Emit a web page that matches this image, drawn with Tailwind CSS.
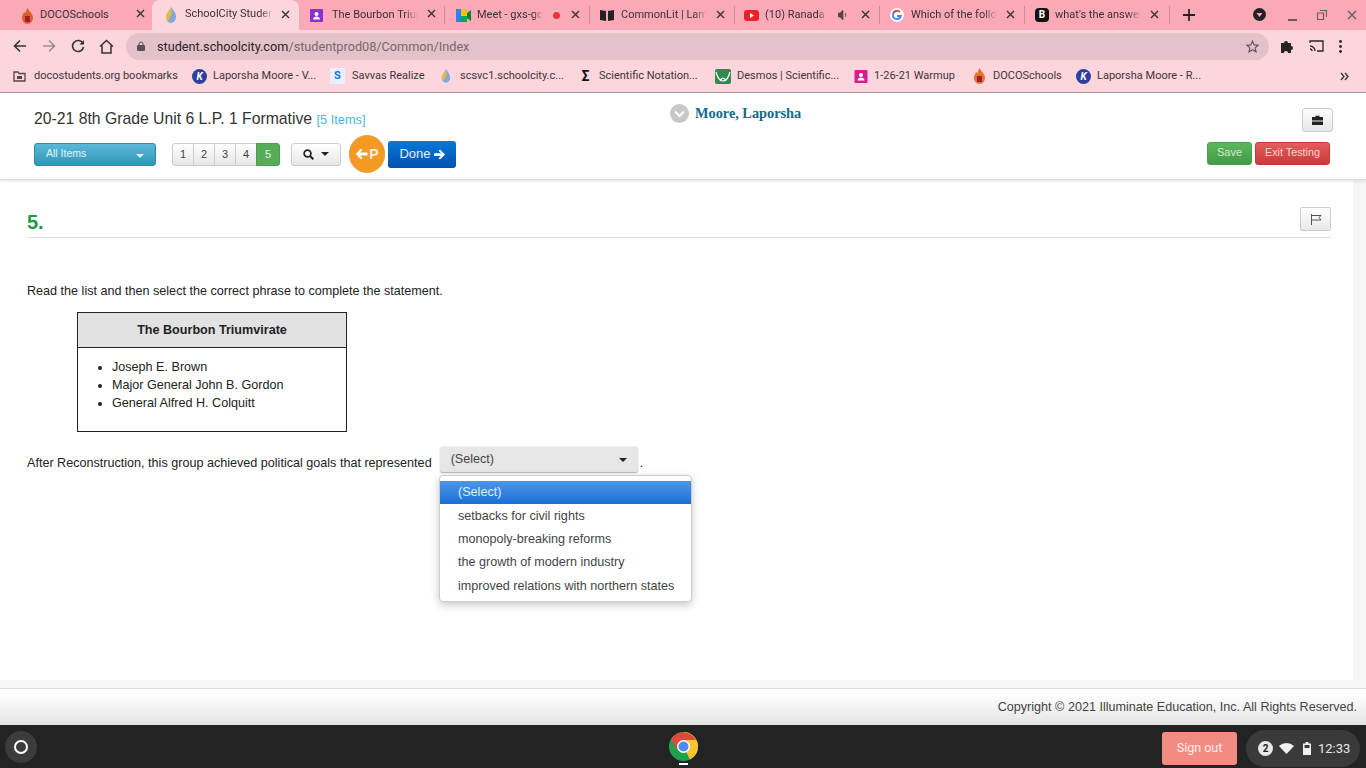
<!DOCTYPE html>
<html lang="en">
<head>
  <meta charset="UTF-8" />
  <title>SchoolCity Student</title>
  <script src="https://cdn.jsdelivr.net/npm/@tailwindcss/browser@4"></script>
</head>
<body class="w-[1366px] h-[768px] overflow-hidden bg-white font-['Liberation_Sans',sans-serif] text-[12.6px] text-[#222] flex flex-col">

  <!-- browser tabs -->
  <div class="h-[30px] bg-[#fba9b6] flex items-end pl-2 font-['Roboto',sans-serif] text-[11px] text-[#3a3034] relative shrink-0">
    <div class="w-[145px] h-[28px] pb-[1px] flex items-center pl-3 relative">
      <svg class="w-[15px] h-[16px] shrink-0" viewBox="0 0 15 16"><path d="M7.500 0c1 3 5.500 5 5.500 10a5.500 6 0 0 1-11 0c0-3 1.500-4 2-6 1 1 1.500 1 1.500 1 .5-2 1-3 2-5z" fill="#d9622b"/><rect x="5" y="8" width="5" height="6" fill="#a51e2c"/></svg>
      <span class="ml-[5px] w-[80px] overflow-hidden whitespace-nowrap">DOCOSchools</span>
      <svg class="absolute left-[128px] top-[7px] w-[9px] h-[9px]" viewBox="0 0 9 9"><path d="M1 1l7 7M8 1l-7 7" stroke="#3a3034" stroke-width="1.400"/></svg>
    </div>
    <div class="w-[147px] h-[30px] pb-[1px] -ml-px bg-[#fdd5dd] rounded-t-lg flex items-center pl-3 relative">
      <svg class="w-[13px] h-[16px] shrink-0" viewBox="0 0 13 16"><path d="M7 0c3 4 5 6 5 10a5 6 0 0 1-10 0c0-3 3-6 5-10z" fill="#7fa8dc"/><path d="M7 1c2 4 0 8-3 13a5 5 0 0 1-2-4c0-3 3-6 5-9z" fill="#e8b93f"/></svg>
      <span class="ml-[8px] w-[88px] overflow-hidden whitespace-nowrap [mask-image:linear-gradient(90deg,#000_85%,transparent)]">SchoolCity Student</span>
      <svg class="absolute left-[129px] top-[10px] w-[9px] h-[9px]" viewBox="0 0 9 9"><path d="M1 1l7 7M8 1l-7 7" stroke="#3a3034" stroke-width="1.400"/></svg>
    </div>
    <div class="w-[145px] h-[28px] pb-[1px] flex items-center pl-[11px] relative">
      <svg class="w-[13px] h-[13px] shrink-0" viewBox="0 0 13 13"><rect width="13" height="13" rx="1" fill="#8a2fd6"/><circle cx="6.500" cy="5" r="2" fill="#fff"/><path d="M3 10.500c0-4 7-4 7 0z" fill="#fff"/></svg>
      <span class="ml-[9px] w-[86px] overflow-hidden whitespace-nowrap [mask-image:linear-gradient(90deg,#000_85%,transparent)]">The Bourbon Triumvirate</span>
      <svg class="absolute left-[128px] top-[7px] w-[9px] h-[9px]" viewBox="0 0 9 9"><path d="M1 1l7 7M8 1l-7 7" stroke="#3a3034" stroke-width="1.400"/></svg>
    </div>
    <div class="w-[145px] h-[18px] self-center flex items-center pl-[11px] relative border-l border-[#c98d98]">
      <svg class="w-[15px] h-[13px] shrink-0" viewBox="0 0 15 13"><rect width="5" height="13" fill="#2684fc"/><rect x="5" width="6" height="6" fill="#fbbc04"/><rect x="5" y="7" width="6" height="6" fill="#00ac47"/><path d="M11 4l4-3v11l-4-3z" fill="#00832d"/></svg>
      <span class="ml-[6px] w-[66px] overflow-hidden whitespace-nowrap [mask-image:linear-gradient(90deg,#000_85%,transparent)]">Meet - gxs-gcdx-abc</span>
      <span class="ml-[8px] w-[11px] h-[11px] rounded-full bg-[#e8323c] border-2 border-[#f7b0b6] shrink-0"></span>
      <svg class="absolute left-[126px] top-[4px] w-[9px] h-[9px]" viewBox="0 0 9 9"><path d="M1 1l7 7M8 1l-7 7" stroke="#3a3034" stroke-width="1.400"/></svg>
    </div>
    <div class="w-[145px] h-[18px] self-center flex items-center pl-[10px] relative border-l border-[#c98d98]">
      <svg class="w-[14px] h-[12px] shrink-0" viewBox="0 0 14 12"><path d="M0 1l6 1v10L0 11zM8 2l6-1v10l-6 1z" fill="#222"/></svg>
      <span class="ml-[7px] w-[86px] overflow-hidden whitespace-nowrap [mask-image:linear-gradient(90deg,#000_85%,transparent)]">CommonLit | Lam</span>
      <svg class="absolute left-[126px] top-[4px] w-[9px] h-[9px]" viewBox="0 0 9 9"><path d="M1 1l7 7M8 1l-7 7" stroke="#3a3034" stroke-width="1.400"/></svg>
    </div>
    <div class="w-[145px] h-[18px] self-center flex items-center pl-[9px] relative border-l border-[#c98d98]">
      <svg class="w-[15px] h-[11px] shrink-0" viewBox="0 0 15 11"><rect width="15" height="11" rx="3" fill="#e8212b"/><path d="M6 3l4 2.500-4 2.500z" fill="#fff"/></svg>
      <span class="ml-[6px] w-[62px] overflow-hidden whitespace-nowrap [mask-image:linear-gradient(90deg,#000_85%,transparent)]">(10) Ranada - Hey</span>
      <svg class="ml-[11px] w-[10px] h-[10px] shrink-0" viewBox="0 0 10 10"><path d="M0 3h2l3-3v10L2 7H0zM7 3c1 1 1 3 0 4" fill="#544" stroke="#544" stroke-width=".6"/></svg>
      <svg class="absolute left-[126px] top-[4px] w-[9px] h-[9px]" viewBox="0 0 9 9"><path d="M1 1l7 7M8 1l-7 7" stroke="#3a3034" stroke-width="1.400"/></svg>
    </div>
    <div class="w-[145px] h-[18px] self-center flex items-center pl-[10px] relative border-l border-[#c98d98]">
      <svg class="w-[14px] h-[14px] shrink-0" viewBox="0 0 14 14"><circle cx="7" cy="7" r="7" fill="#fff"/><path d="M7 3a4 4 0 1 0 3.800 5H7" fill="none" stroke="#4285f4" stroke-width="1.800"/><path d="M3.500 5A4 4 0 0 1 10 4" fill="none" stroke="#ea4335" stroke-width="1.800"/></svg>
      <span class="ml-[7px] w-[86px] overflow-hidden whitespace-nowrap [mask-image:linear-gradient(90deg,#000_85%,transparent)]">Which of the following</span>
      <svg class="absolute left-[126px] top-[4px] w-[9px] h-[9px]" viewBox="0 0 9 9"><path d="M1 1l7 7M8 1l-7 7" stroke="#3a3034" stroke-width="1.400"/></svg>
    </div>
    <div class="w-[145px] h-[18px] self-center flex items-center pl-[10px] relative border-l border-[#c98d98]">
      <span class="w-[14px] h-[14px] bg-[#111] rounded-sm text-white text-[10px] font-bold leading-[14px] text-center shrink-0">B</span>
      <span class="ml-[6px] w-[86px] overflow-hidden whitespace-nowrap [mask-image:linear-gradient(90deg,#000_85%,transparent)]">what's the answer</span>
      <svg class="absolute left-[125px] top-[4px] w-[9px] h-[9px]" viewBox="0 0 9 9"><path d="M1 1l7 7M8 1l-7 7" stroke="#3a3034" stroke-width="1.400"/></svg>
    </div>
    <div class="border-l border-[#c98d98] h-[18px] self-center pl-[13px] flex items-center">
      <svg class="w-[12px] h-[12px]" viewBox="0 0 13 13"><path d="M6.500 0v13M0 6.500h13" stroke="#222" stroke-width="1.900"/></svg>
    </div>
    <svg class="absolute left-[1253px] top-[8px] w-[13px] h-[13px]" viewBox="0 0 13 13"><circle cx="6.500" cy="6.500" r="6.500" fill="#222"/><path d="M3.500 5h6l-3 4z" fill="#fba9b6"/></svg>
    <span class="absolute left-[1288px] top-[19px] w-[9px] h-[2px] bg-[#6b5a5e]"></span>
    <svg class="absolute left-[1317px] top-[10px] w-[10px] h-[10px]" viewBox="0 0 10 10"><path d="M3 .5h6.500V7M.5 3h6v6.500h-6z" fill="none" stroke="#6b5a5e" stroke-width="1.200"/></svg>
    <svg class="absolute left-[1347px] top-[10px] w-[10px] h-[10px]" viewBox="0 0 10 10"><path d="M1 1l8 8M9 1l-8 8" stroke="#6b5a5e" stroke-width="1.400"/></svg>
  </div>

  <!-- address bar -->
  <div class="h-[32px] bg-[#fdd5dd] flex items-center shrink-0 relative">
    <svg class="ml-[13px] w-[14px] h-[14px]" viewBox="0 0 14 14"><path d="M13 7H2M7 1.500L1.500 7 7 12.500" fill="none" stroke="#333" stroke-width="1.600"/></svg>
    <svg class="ml-[15px] w-[14px] h-[14px]" viewBox="0 0 14 14"><path d="M1 7h11M7 1.500L12.500 7 7 12.500" fill="none" stroke="#9c8c90" stroke-width="1.600"/></svg>
    <svg class="ml-[15px] w-[14px] h-[14px]" viewBox="0 0 14 14"><path d="M12 4.500A5.500 5.500 0 1 0 12.500 8" fill="none" stroke="#333" stroke-width="1.600"/><path d="M13 1v4.500H8.500z" fill="#333"/></svg>
    <svg class="ml-[14px] w-[15px] h-[15px]" viewBox="0 0 15 15"><path d="M1 7.500L7.500 1.500 14 7.500M3 6.500V14h9V6.500" fill="none" stroke="#333" stroke-width="1.500"/></svg>
    <div class="ml-[12px] w-[1143px] h-[27px] rounded-full bg-[#e4c2c9] flex items-center pl-[11px] font-['Roboto',sans-serif] text-[12.7px]">
      <svg class="w-[8px] h-[10px]" viewBox="0 0 8 10"><rect y="4" width="8" height="6" rx="1" fill="#5b5053"/><path d="M2 4.500V3a2 2 0 0 1 4 0v1.500" fill="none" stroke="#5b5053"/></svg>
      <span class="ml-[12px] pt-[2px] text-[#2a2326]">student.schoolcity.com<span class="text-[#75686c]">/studentprod08/Common/Index</span></span>
      <svg class="ml-auto mr-[10px] w-[13px] h-[13px]" viewBox="0 0 24 24"><path d="M12 2l3 7 7.500.6-5.700 4.900 1.800 7.500L12 18l-6.600 4 1.800-7.500L1.500 9.600 9 9z" fill="none" stroke="#5b5053" stroke-width="2"/></svg>
    </div>
    <svg class="ml-[11px] w-[14px] h-[14px]" viewBox="0 0 14 14"><path d="M1 4h3a2 2 0 0 1 4 0h3v3a2 2 0 0 1 0 4v3H8a2 2 0 0 0-4 0H1z" fill="#2a2326"/></svg>
    <svg class="ml-[15px] w-[15px] h-[12px]" viewBox="0 0 15 12"><path d="M1 3V1h13v10H8M1 6a5 5 0 0 1 5 5M1 9a2 2 0 0 1 2 2" fill="none" stroke="#2a2326" stroke-width="1.300"/></svg>
    <svg class="ml-[15px] w-[3px] h-[13px]" viewBox="0 0 3 13"><circle cx="1.500" cy="1.500" r="1.400" fill="#2a2326"/><circle cx="1.500" cy="6.500" r="1.400" fill="#2a2326"/><circle cx="1.500" cy="11.500" r="1.400" fill="#2a2326"/></svg>
  </div>

  <!-- bookmarks -->
  <div class="h-[31px] pb-[2px] bg-[#fdd5dd] border-b border-[#a8989c] flex items-center font-['Roboto',sans-serif] text-[11px] text-[#3d3437] shrink-0 relative">
    <div class="ml-[13px] flex items-center gap-[8px] w-[179px] whitespace-nowrap"><svg class="w-[13px] h-[11px]" viewBox="0 0 13 11"><path d="M1 1h4l1 1.500h6V10H1z" fill="none" stroke="#544" stroke-width="1.300"/><rect x="4" y="5" width="5" height="3" fill="#544"/></svg>docostudents.org bookmarks</div>
    <div class="flex items-center gap-[6px] w-[138px] whitespace-nowrap"><span class="w-[15px] h-[15px] rounded-full bg-[#2c3e9e] text-white text-[10px] font-bold italic text-center leading-[15px]">K</span>Laporsha Moore - V...</div>
    <div class="flex items-center gap-[7px] w-[110px] whitespace-nowrap"><span class="w-[15px] h-[16px] bg-[#e8f0fa] text-[#1b6fd1] text-[11px] font-bold text-center leading-[16px]">S</span>Savvas Realize</div>
    <div class="flex items-center gap-[9px] w-[139px] whitespace-nowrap"><svg class="w-[11px] h-[14px]" viewBox="0 0 13 16"><path d="M7 0c3 4 5 6 5 10a5 6 0 0 1-10 0c0-3 3-6 5-10z" fill="#7fa8dc"/><path d="M7 1c2 4 0 8-3 13a5 5 0 0 1-2-4c0-3 3-6 5-9z" fill="#e8b93f"/></svg>scsvc1.schoolcity.c...</div>
    <div class="flex items-center gap-[7px] w-[136px] whitespace-nowrap"><span class="w-[13px] text-[14px] font-bold leading-none text-[#111] text-center">Σ</span>Scientific Notation...</div>
    <div class="flex items-center gap-[6px] w-[139px] whitespace-nowrap"><svg class="w-[16px] h-[15px]" viewBox="0 0 16 15"><rect width="16" height="15" rx="2" fill="#2f8a4e"/><path d="M1 3c3 12 11 12 14 0M5 12c2-4 4-4 6 0" fill="none" stroke="#fff" stroke-width="1.200"/></svg>Desmos | Scientific...</div>
    <div class="flex items-center gap-[6px] w-[118px] whitespace-nowrap"><svg class="w-[14px] h-[13px]" viewBox="0 0 13 13"><rect width="13" height="13" rx="1" fill="#d31e8c"/><circle cx="6.500" cy="5" r="2" fill="#fff"/><path d="M3 10.500c0-4 7-4 7 0z" fill="#fff"/></svg>1-26-21 Warmup</div>
    <div class="flex items-center gap-[6px] w-[104px] whitespace-nowrap"><svg class="w-[15px] h-[16px]" viewBox="0 0 15 16"><path d="M7.500 0c1 3 5.500 5 5.500 10a5.500 6 0 0 1-11 0c0-3 1.500-4 2-6 1 1 1.500 1 1.500 1 .5-2 1-3 2-5z" fill="#e2752e"/><rect x="5" y="8" width="5" height="6" fill="#a51e2c"/></svg>DOCOSchools</div>
    <div class="flex items-center gap-[6px] whitespace-nowrap"><span class="w-[15px] h-[15px] rounded-full bg-[#2c3e9e] text-white text-[10px] font-bold italic text-center leading-[15px]">K</span>Laporsha Moore - R...</div>
    <svg class="absolute left-[1340px] top-[10px] w-[9px] h-[9px]" viewBox="0 0 9 9"><path d="M1 1l3 3.500-3 3.500M5 1l3 3.500-3 3.500" fill="none" stroke="#333" stroke-width="1.300"/></svg>
  </div>

  <!-- test header -->
  <header class="h-[87px] bg-white border-b border-[#ddd] shadow-[0_1px_3px_rgba(0,0,0,0.12)] px-[34px] pt-[13px] shrink-0 relative z-10">
    <div class="flex items-start h-[28px]">
      <div class="w-[636px] pt-[3px] text-[15.75px] leading-[20px] text-[#333] whitespace-nowrap">20-21 8th Grade Unit 6 L.P. 1 Formative <span class="text-[12.8px] text-[#4fb3dc]">[5 Items]</span></div>
      <div class="flex items-center gap-[6px] -mt-[3px]">
        <span class="w-[19px] h-[19px] rounded-full bg-[#c8c8c8] flex items-center justify-center"><svg class="w-[11px] h-[8px]" viewBox="0 0 11 8"><path d="M1 1.500l4.500 4.500L10 1.500" fill="none" stroke="#fff" stroke-width="2.200"/></svg></span>
        <span class="font-['Liberation_Serif',serif] font-bold text-[14.3px] text-[#0f6a8b]">Moore, Laporsha</span>
      </div>
      <button class="ml-auto -mr-px mt-[2px] w-[31px] h-[24px] rounded-[3px] border border-[#ccc] bg-gradient-to-b from-white to-[#e6e6e6] flex items-center justify-center"><svg class="w-[11px] h-[10px]" viewBox="0 0 11 10"><path d="M3.500 2V.8h4V2H11v3.500H0V2zM0 6.500h11V10H0z" fill="#222"/></svg></button>
    </div>
    <div class="flex items-center h-[38px] mt-px">
      <button class="w-[122px] h-[23px] rounded-[3px] border border-[#2f8bac] bg-gradient-to-b from-[#5bb8d6] to-[#2f96b8] text-white/85 text-[10.5px] text-left pl-[11px] relative">All Items<span class="absolute right-[11px] top-[10px] border-x-[4px] border-x-transparent border-t-[4px] border-t-white/85"></span></button>
      <div class="ml-[16px] flex h-[23px] text-[11px] text-[#444]">
        <span class="w-[22px] flex items-center justify-center rounded-l-[3px] border border-[#ccc] bg-gradient-to-b from-white to-[#e6e6e6]">1</span>
        <span class="w-[22px] -ml-px flex items-center justify-center border border-[#ccc] bg-gradient-to-b from-white to-[#e6e6e6]">2</span>
        <span class="w-[22px] -ml-px flex items-center justify-center border border-[#ccc] bg-gradient-to-b from-white to-[#e6e6e6]">3</span>
        <span class="w-[22px] -ml-px flex items-center justify-center border border-[#ccc] bg-gradient-to-b from-white to-[#e6e6e6]">4</span>
        <span class="w-[24px] -ml-px flex items-center justify-center rounded-r-[3px] border border-[#4a9e4c] bg-[#56ac58] text-white/85">5</span>
      </div>
      <button class="ml-[11px] w-[50px] h-[23px] rounded-[3px] border border-[#ccc] bg-gradient-to-b from-white to-[#e6e6e6] flex items-center justify-center gap-[7px]"><svg class="w-[11px] h-[11px]" viewBox="0 0 11 11"><circle cx="4.500" cy="4.500" r="3.400" fill="none" stroke="#222" stroke-width="1.700"/><path d="M7 7l3.300 3.300" stroke="#222" stroke-width="2"/></svg><span class="border-x-[4px] border-x-transparent border-t-[4px] border-t-[#222]"></span></button>
      <button class="ml-[8px] w-[36px] h-[38px] rounded-full bg-[#f39a22] border border-[#e9a04a] text-white/85 font-bold text-[14px] flex items-center justify-center gap-px"><svg class="w-[13px] h-[12px]" viewBox="0 0 13 12"><path d="M6 .5L.8 6 6 11.500l1.500-1.500L5 7.500h7.500v-3H5L7.500 2z" fill="#fff"/></svg>P</button>
      <button class="ml-[3px] w-[68px] h-[27px] rounded-[3px] bg-gradient-to-b from-[#0a78d6] to-[#0053ad] text-white/90 text-[13px] flex items-center justify-center gap-[3px]">Done<svg class="w-[11px] h-[11px]" viewBox="0 0 12 12"><path d="M6.500.5L12 6l-5.500 5.500-1.500-1.500L7.500 7.500H0v-3h7.500L5 2z" fill="#fff"/></svg></button>
      <button class="ml-auto w-[45px] h-[23px] pb-[2px] rounded-[3px] border border-[#4b9e4d] bg-gradient-to-b from-[#5cb85c] to-[#439a46] text-white/75 text-[11px] -mt-[2px]">Save</button>
      <button class="ml-[3px] mr-[2px] w-[75px] h-[23px] pb-[2px] rounded-[3px] border border-[#c23a38] bg-gradient-to-b from-[#e35d5b] to-[#c83a38] text-white/75 text-[10.8px] -mt-[2px]">Exit Testing</button>
    </div>
  </header>

  <!-- question area -->
  <div class="flex h-[500px] shrink-0">
    <main class="w-[1353px] pl-[27px] pr-[22px] relative">
      <div class="flex items-end h-[58px] border-b border-[#ddd] pb-[2px]">
        <span class="text-[20px] leading-[26px] font-bold text-[#1b9849]">5.</span>
        <button class="ml-auto w-[31px] h-[24px] mb-[4px] rounded-[2px] border border-[#ccc] bg-gradient-to-b from-white to-[#e8e8e8] flex items-center justify-center"><svg class="w-[12px] h-[11px]" viewBox="0 0 12 11"><path d="M1.500 0v11M1.500 1.500h9.500l-2 2 2 2.500H1.500" fill="none" stroke="#555"/></svg></button>
      </div>
      <p class="mt-[44px] leading-[18px]">Read the list and then select the correct phrase to complete the statement.</p>
      <div class="ml-[50px] mt-[12px] w-[270px] h-[120px] border border-[#222]">
        <div class="h-[35px] bg-[#e2e2e2] border-b border-[#222] font-bold flex items-center justify-center">The Bourbon Triumvirate</div>
        <ul class="list-disc pl-[34px] mt-[10px] leading-[18px]">
          <li>Joseph E. Brown</li>
          <li>Major General John B. Gordon</li>
          <li>General Alfred H. Colquitt</li>
        </ul>
      </div>
      <div class="mt-[15px] flex items-start">
        <span class="mt-[7px] leading-[18px]">After Reconstruction, this group achieved political goals that represented</span>
        <button class="ml-[8px] w-[198px] h-[26px] rounded-[3px] bg-[#e6e6e6] border-b border-[#bbb] shadow-[0_0_2px_rgba(0,0,0,0.2)] text-left pl-[11px] pb-[1px] pt-[1px] text-[#444] relative">(Select)<span class="absolute right-[11px] top-[11px] border-x-[4px] border-x-transparent border-t-[4px] border-t-[#222]"></span></button>
        <span class="ml-[2px] mt-[7px] leading-[18px]">.</span>
      </div>
      <!-- open dropdown -->
      <ul class="absolute left-[439px] top-[295px] w-[253px] h-[127px] bg-white rounded-[4px] border border-[#ccc] shadow-[0_3px_8px_rgba(0,0,0,0.22)] pt-[5px] text-[#444] z-20">
        <li class="h-[23px] pl-[18px] flex items-center bg-gradient-to-b from-[#4a98e8] to-[#1a6fd6] text-white/85">(Select)</li>
        <li class="h-[23px] mt-px pl-[18px] flex items-center">setbacks for civil rights</li>
        <li class="h-[23px] pl-[18px] flex items-center">monopoly-breaking reforms</li>
        <li class="h-[23px] pl-[18px] flex items-center">the growth of modern industry</li>
        <li class="h-[24px] pl-[18px] flex items-center">improved relations with northern states</li>
      </ul>
    </main>
    <div class="w-[13px] bg-[#f5f5f5]"></div>
  </div>

  <!-- page footer -->
  <div class="h-[8px] bg-[#f5f5f5] shrink-0"></div>
  <footer class="h-[37px] border-t border-[#ddd] bg-gradient-to-b from-white from-10% to-[#e4e4e4] flex items-center justify-end pr-[9px] text-[#444] shrink-0">Copyright © 2021 Illuminate Education, Inc. All Rights Reserved.</footer>

  <!-- chromeos shelf -->
  <div class="h-[43px] bg-[#232323] relative flex items-center shrink-0 font-['Roboto',sans-serif]">
    <span class="ml-[5px] w-[32px] h-[32px] rounded-full bg-[#3c3c3c] flex items-center justify-center"><span class="w-[14px] h-[14px] rounded-full border-2 border-white"></span></span>
    <svg class="absolute left-[669px] top-[7px] w-[29px] h-[29px]" viewBox="0 0 29 29">
      <circle cx="14.500" cy="14.500" r="14.500" fill="#1fa14f"/>
      <path d="M14.500 0A14.500 14.500 0 0 1 29 14.500 14.500 14.500 0 0 1 21 27.500L14.500 14.500z" fill="#fbc531"/>
      <path d="M2 7a14.500 14.500 0 0 1 25 1H14.500L8 18z" fill="#dc4a3d"/>
      <circle cx="14.500" cy="14.500" r="6.500" fill="#fff"/>
      <circle cx="14.500" cy="14.500" r="5" fill="#4e8df0"/>
    </svg>
    <span class="absolute left-[679px] top-[38px] w-[9px] h-[2px] bg-white"></span>
    <button class="absolute left-[1162px] top-[7px] w-[75px] h-[33px] rounded-[3px] bg-[#f28b82] text-white/85 text-[12.5px]">Sign out</button>
    <div class="absolute left-[1246px] top-[5px] w-[114px] h-[37px] rounded-full bg-[#3a3a3a] flex items-center pl-[12px] text-[#e8e8e8] text-[13px]">
      <span class="w-[15px] h-[15px] rounded-full bg-[#e8e8e8] text-[#222] text-[10px] font-bold text-center leading-[15px]">2</span>
      <svg class="ml-[6px] w-[15px] h-[11px]" viewBox="0 0 15 11"><path d="M0 3a11 11 0 0 1 15 0l-7.500 8z" fill="#f0f0f0"/></svg>
      <svg class="ml-[9px] w-[8px] h-[13px]" viewBox="0 0 8 13"><path d="M2.500 0h3v1.500H8V13H0V1.500h2.500z" fill="#f0f0f0"/><rect x="1.500" y="3" width="5" height="3" fill="#3a3a3a"/></svg>
      <span class="ml-[7px]">12:33</span>
    </div>
  </div>
</body>
</html>
